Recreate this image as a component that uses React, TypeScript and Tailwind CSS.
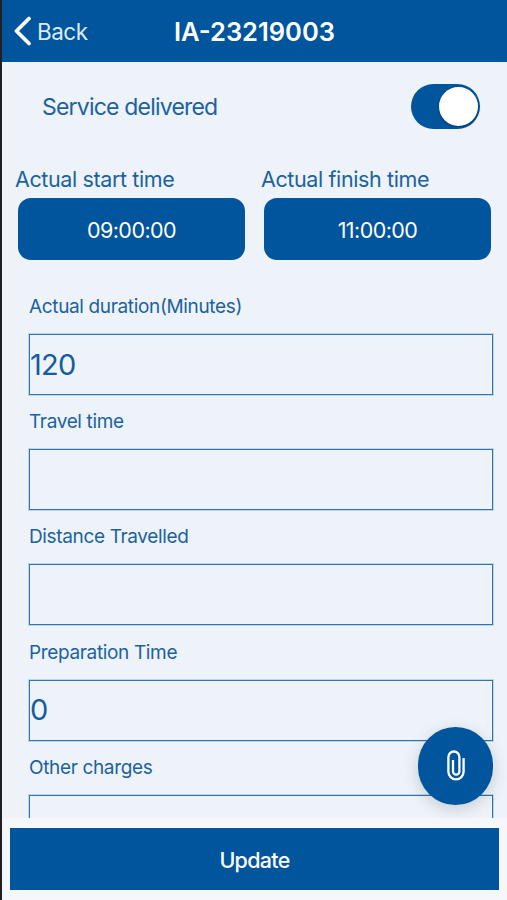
import { useState } from "react";

const FIELDS = [
  { name: "duration", label: "Actual duration(Minutes)", value: "120" },
  { name: "travel", label: "Travel time", value: "" },
  { name: "distance", label: "Distance Travelled", value: "" },
  { name: "preparation", label: "Preparation Time", value: "0" },
  { name: "charges", label: "Other charges", value: "" },
];

function BackIcon() {
  return (
    <svg width="18" height="30" viewBox="0 0 18 30" fill="none" className="mb-[2px]">
      <path d="M15 2.5L2.5 15L15 27.5" stroke="white" strokeWidth="3.8" strokeLinecap="round" strokeLinejoin="round" />
    </svg>
  );
}

function PaperclipIcon() {
  return (
    <svg width="18" height="31" viewBox="0 0 18 31" fill="none" className="mb-[2px]">
      <path
        d="M16.6 8V21.8a7.6 7.6 0 0 1-15.2 0V7a5.5 5.5 0 0 1 11 0V21.5a3.2 3.2 0 0 1-6.4 0V10"
        stroke="white"
        strokeWidth="2.3"
      />
    </svg>
  );
}

function TimeButton({ label, time }: { label: string; time: string }) {
  return (
    <div className="w-[229px]">
      <div className="-ml-px text-[21.5px] leading-[34px] tracking-[-0.38px]">{label}</div>
      <button className="mt-[2px] ml-[2px] block h-[62px] w-[227px] rounded-[13px] bg-[#00559d] pt-[2px] text-[21.5px] tracking-[-0.55px] text-white">
        {time}
      </button>
    </div>
  );
}

export default function App() {
  const [delivered, setDelivered] = useState(true);

  return (
    <div className="flex h-[900px] w-[507px] flex-col overflow-hidden border-l-2 border-[#1f2026] bg-[#edf3f9] font-['Inter',sans-serif] text-[#1c629f]">
      <header className="grid h-[62px] shrink-0 grid-cols-[1fr_auto_1fr] items-center bg-[#00559d] text-white">
        <button className="flex items-center gap-[5px] pt-px pl-[12px] text-[22.5px] tracking-[-0.5px] text-[#dbe9f8]">
          <BackIcon />
          Back
        </button>
        <h1 className="pt-[3px] text-[25.5px] font-semibold">IA-23219003</h1>
      </header>

      <main className="min-h-0 flex-1 overflow-hidden">
        <div className="flex h-[89px] items-center justify-between pr-[27px] pl-[40px]">
          <span className="pt-[2px] text-[23px] tracking-[-0.8px]">Service delivered</span>
          <button
            role="switch"
            aria-checked={delivered}
            onClick={() => setDelivered(!delivered)}
            className={
              delivered
                ? "flex h-[45px] w-[69px] items-center justify-end rounded-full bg-[#00559d] px-[2px]"
                : "flex h-[45px] w-[69px] items-center justify-start rounded-full bg-gray-300 px-[2px]"
            }
          >
            <span className="h-[39px] w-[39px] rounded-full bg-white shadow-[0_1px_3px_rgba(0,0,0,0.3)]" />
          </button>
        </div>

        <div className="flex gap-[17px] pt-[11px] pl-[14px]">
          <TimeButton label="Actual start time" time="09:00:00" />
          <TimeButton label="Actual finish time" time="11:00:00" />
        </div>

        <div className="pt-[32px] pr-[14px] pl-[27px]">
          {FIELDS.map((field) => (
            <label key={field.name} className="block h-[115.2px]">
              <span className="block h-[42px] text-[19px] leading-[30.4px] tracking-[-0.35px]">{field.label}</span>
              <input
                defaultValue={field.value}
                className="block h-[61px] w-full border border-[#3673aa] px-0 pb-px text-[29px] tracking-[-0.8px] text-[#165c9e] shadow-[0_0_0_1px_rgba(33,130,200,0.25)] outline-none"
              />
            </label>
          ))}
        </div>
      </main>

      <footer className="relative h-[82px] shrink-0 bg-[#f5f7fb] pt-[10px] pr-[8px] pl-[8px]">
        <button className="absolute -top-[91px] right-[14px] flex h-[78px] w-[75px] items-center justify-center rounded-full bg-[#00559d] shadow-[0_4px_16px_rgba(0,0,0,0.16)]">
          <PaperclipIcon />
        </button>
        <button className="block h-[62px] w-full bg-[#00559d] pt-[2px] text-[21.5px] font-[450] tracking-[-0.7px] text-white">
          Update
        </button>
      </footer>
    </div>
  );
}
